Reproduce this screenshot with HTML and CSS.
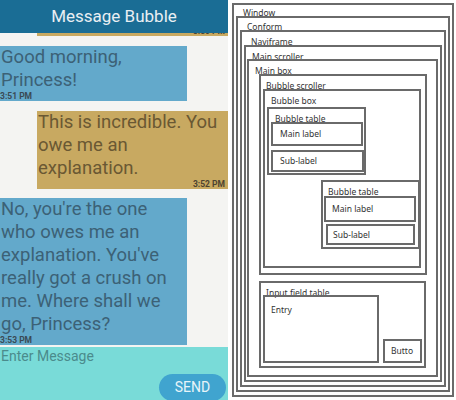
FILE: index.html
```html
<!DOCTYPE html>
<html>
<head>
<meta charset="utf-8">
<link rel="stylesheet" href="styles.css">
</head>
<body>
<div class="page">
  <section class="phone">
    <header class="appbar">Message Bubble</header>
    <div class="messages">
      <div class="bubble mine partial"><span class="time">3:50 PM</span></div>
      <div class="bubble theirs b1">
        <p class="msg">Good morning,<br>Princess!</p>
        <span class="time">3:51 PM</span>
      </div>
      <div class="bubble mine b2">
        <p class="msg">This is incredible. You<br>owe me an<br>explanation.</p>
        <span class="time right">3:52 PM</span>
      </div>
      <div class="bubble theirs b3">
        <p class="msg">No, you're the one<br>who owes me an<br>explanation. You've<br>really got a crush on<br>me. Where shall we<br>go, Princess?</p>
        <span class="time">3:53 PM</span>
      </div>
    </div>
    <div class="composer">
      <div class="placeholder">Enter Message</div>
      <div class="send">SEND</div>
    </div>
  </section>
  <section class="diagram">
    <div class="box window">
      <div class="lbl l-window">Window</div>
      <div class="box conform">
        <div class="lbl l-conform">Conform</div>
        <div class="box naviframe">
          <div class="lbl l-navi">Naviframe</div>
          <div class="box mscroller">
            <div class="lbl l-ms">Main scroller</div>
            <div class="box mainbox">
              <div class="lbl l-mb">Main box</div>
              <div class="box bscroller">
                <div class="lbl l-bs">Bubble scroller</div>
                <div class="box bbox">
                  <div class="lbl l-bb">Bubble box</div>
                  <div class="box table1">
                    <div class="lbl l-t1">Bubble table</div>
                    <div class="box leaf main1">Main label</div>
                    <div class="box leaf sub1">Sub-label</div>
                  </div>
                  <div class="box table2">
                    <div class="lbl l-t2">Bubble table</div>
                    <div class="box leaf main2">Main label</div>
                    <div class="box leaf sub2">Sub-label</div>
                  </div>
                </div>
              </div>
              <div class="box itable">
                <div class="lbl l-it">Input field table</div>
                <div class="irow">
                  <div class="box entry">Entry</div>
                  <div class="box leaf btn">Butto</div>
                </div>
              </div>
            </div>
          </div>
        </div>
      </div>
    </div>
  </section>
</div>
</body>
</html>
```

FILE: styles.css
```css
* { box-sizing: border-box; }
html, body { margin: 0; padding: 0; background: #ffffff; }
.page { display: flex; width: 456px; height: 400px; overflow: hidden; }

/* ---------- phone ---------- */
.phone {
  width: 228px; height: 400px; display: flex; flex-direction: column;
  background: #f4f4f2; font-family: Roboto, "Noto Sans", sans-serif; overflow: hidden;
}
.appbar {
  height: 33px; flex: none; background: #1a6d95; color: #e9eff3;
  font-size: 17px; line-height: 33px; text-align: center;
}
.messages { flex: 1; display: flex; flex-direction: column; gap: 10px; overflow: hidden; }
.bubble { display: flex; flex-direction: column; flex: none; }
.bubble.theirs { width: 187px; background: #63a9cb; color: #3c6176; }
.bubble.mine { width: 191px; margin-left: 37px; background: #c8a961; color: #6a5833; }
.bubble.partial { height: 3px; overflow: hidden; justify-content: flex-end; }
.b3 { margin-top: -1px; }
.msg { margin: 0; font-size: 18.5px; line-height: 23px; padding-left: 1px; }
.time {
  display: block; font-size: 8.5px; font-weight: 700; line-height: 9px;
  height: 9px; color: #3a4954; flex: none;
}
.mine .time { color: #4d4330; text-align: right; padding-right: 3px; }
.composer {
  height: 53px; flex: none; background: #79dbd8; display: flex; flex-direction: column;
}
.placeholder { font-size: 14px; line-height: 18px; color: #4b8b8c; padding-left: 1px; }
.send {
  margin: 9px 2px 0 auto; width: 67px; height: 27px; border-radius: 14px;
  background: #40a4cf; color: #e7f4f9; font-size: 14px; line-height: 27px; text-align: center;
}

/* ---------- diagram ---------- */
.diagram { width: 228px; height: 400px; background: #fff; font-family: "Noto Sans", sans-serif; color: #333; }
.box { border: 2px solid #6a6a6a; display: flex; flex-direction: column; }
.lbl { flex: none; font-size: 8.5px; line-height: 20px; white-space: nowrap; }
.window { margin: 3px 0 0 4px; width: 222px; height: 394px; padding: 0 2px 3px 2px; }
.l-window { height: 11px; line-height: 16px; padding-left: 7px; }
.conform { flex: 1; padding: 0 2px 3px 2px; }
.l-conform { height: 12px; line-height: 18px; padding-left: 7px; }
.naviframe { flex: 1; padding: 0 2px 3px 2px; }
.l-navi { height: 13px; padding-left: 7px; }
.mscroller { flex: 1; padding: 0 2px 3px 1px; }
.l-ms { height: 12px; padding-left: 5px; }
.mainbox { flex: 1; padding: 0 9px 7px 10px; }
.l-mb { height: 13px; padding-left: 6px; margin-left: -10px; }
.bscroller { height: 201px; flex: none; padding: 0 4px 5px 2px; }
.l-bs { height: 13px; padding-left: 5px; margin-left: -2px; }
.bbox { flex: 1; padding: 0 0 0 2px; }
.l-bb { height: 16px; padding-left: 6px; margin-left: -2px; }
.table1 { width: 99px; height: 68px; flex: none; padding-left: 2px; }
.l-t1 { height: 13px; padding-left: 6px; margin-left: -2px; }
.table2 { width: 99px; height: 69px; flex: none; margin: 5px 0 0 54px; }
.l-t2 { height: 14px; padding-left: 5px; }
.leaf { flex: none; justify-content: center; font-size: 8.5px; line-height: 10px; padding-left: 7px; }
.main1 { width: 92px; height: 24px; }
.sub1 { width: 93px; height: 22px; margin-top: 4px; }
.main2 { width: 92px; height: 26px; margin-left: 1px; padding-left: 6px; }
.sub2 { width: 89px; height: 21px; margin: 2px 0 0 3px; padding-left: 5px; }
.itable { height: 87px; flex: none; margin: 6px 1px 0 0; padding: 0 0 0 2px; }
.l-it { height: 12px; padding-left: 5px; margin-left: -2px; }
.irow { display: flex; align-items: flex-end; }
.entry { width: 116px; height: 68px; font-size: 8.5px; line-height: 10px; padding: 8px 0 0 6px; }
.btn { width: 39px; height: 24px; margin-left: 4px; padding-left: 6px; }
```
